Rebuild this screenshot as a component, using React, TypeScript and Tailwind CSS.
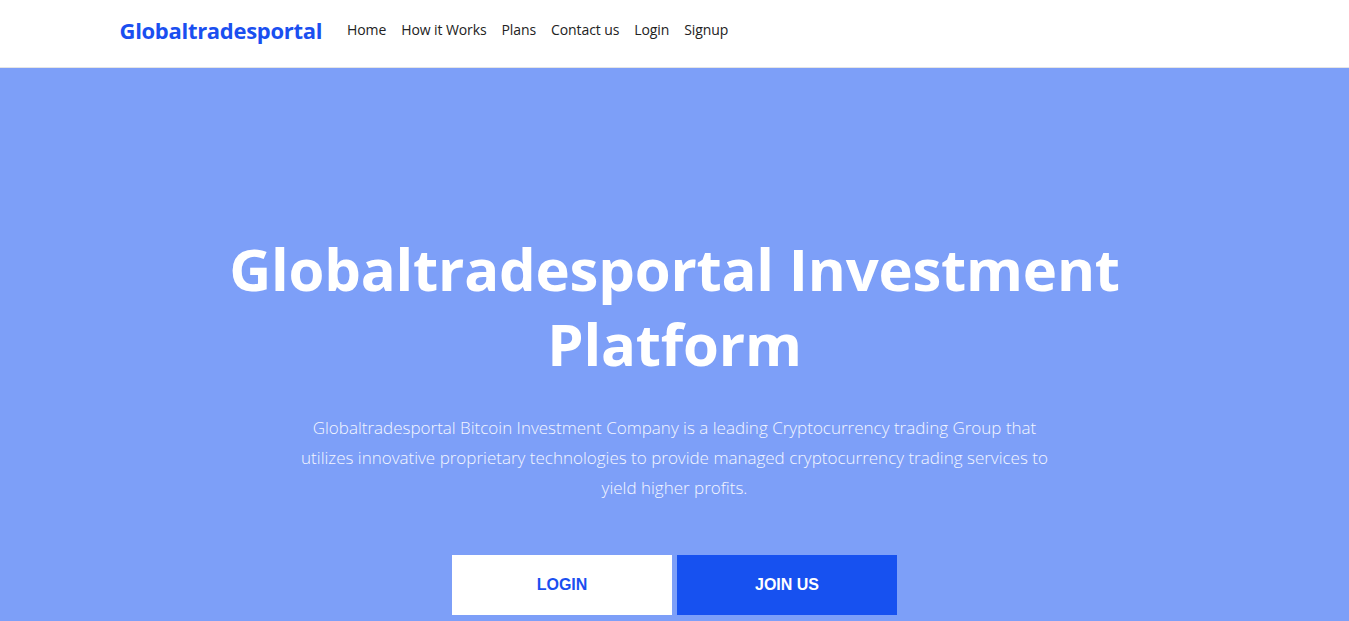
import React from "react";

export default function App() {
  const font = { fontFamily: '"Open Sans", "Noto Sans", sans-serif' };
  return (
    <div className="min-h-screen bg-[#7d9ff8]" style={font}>
      <header className="h-[68px] bg-white border-b border-[#e5e5e5]">
        <div className="mx-auto w-[1140px] px-[15px] pb-[9px] h-full flex items-center">
          <a className="text-[22px] font-bold text-[#1a4ff0] tracking-[-0.3px] mr-[25px] pt-[2px]">Globaltradesportal</a>
          <nav className="flex items-center gap-[15px] text-[14px] text-[#222] tracking-[-0.1px]">
            <a>Home</a>
            <a>How it Works</a>
            <a>Plans</a>
            <a>Contact us</a>
            <a>Login</a>
            <a>Signup</a>
          </nav>
        </div>
      </header>
      <section className="flex flex-col items-center pt-[163px] text-white text-center">
        <h1 className="text-[58px] font-bold leading-[75px] tracking-[-0.2px] w-[960px]">
          Globaltradesportal Investment Platform
        </h1>
        <p className="mt-[32px] w-[760px] text-[17px] font-light leading-[30px] text-[#f4f6ff]">
          Globaltradesportal Bitcoin Investment Company is a leading Cryptocurrency trading Group that utilizes innovative proprietary technologies to provide managed cryptocurrency trading services to yield higher profits.
        </p>
        <div className="mt-[52px] flex gap-[5px]" style={{ fontFamily: '"Liberation Sans", Arial, sans-serif' }}>
          <button className="w-[220px] h-[60px] bg-white text-[#1a4ff0] font-bold text-[16px]">LOGIN</button>
          <button className="w-[220px] h-[60px] bg-[#1751f0] text-white font-bold text-[16px]">JOIN US</button>
        </div>
      </section>
    </div>
  );
}
